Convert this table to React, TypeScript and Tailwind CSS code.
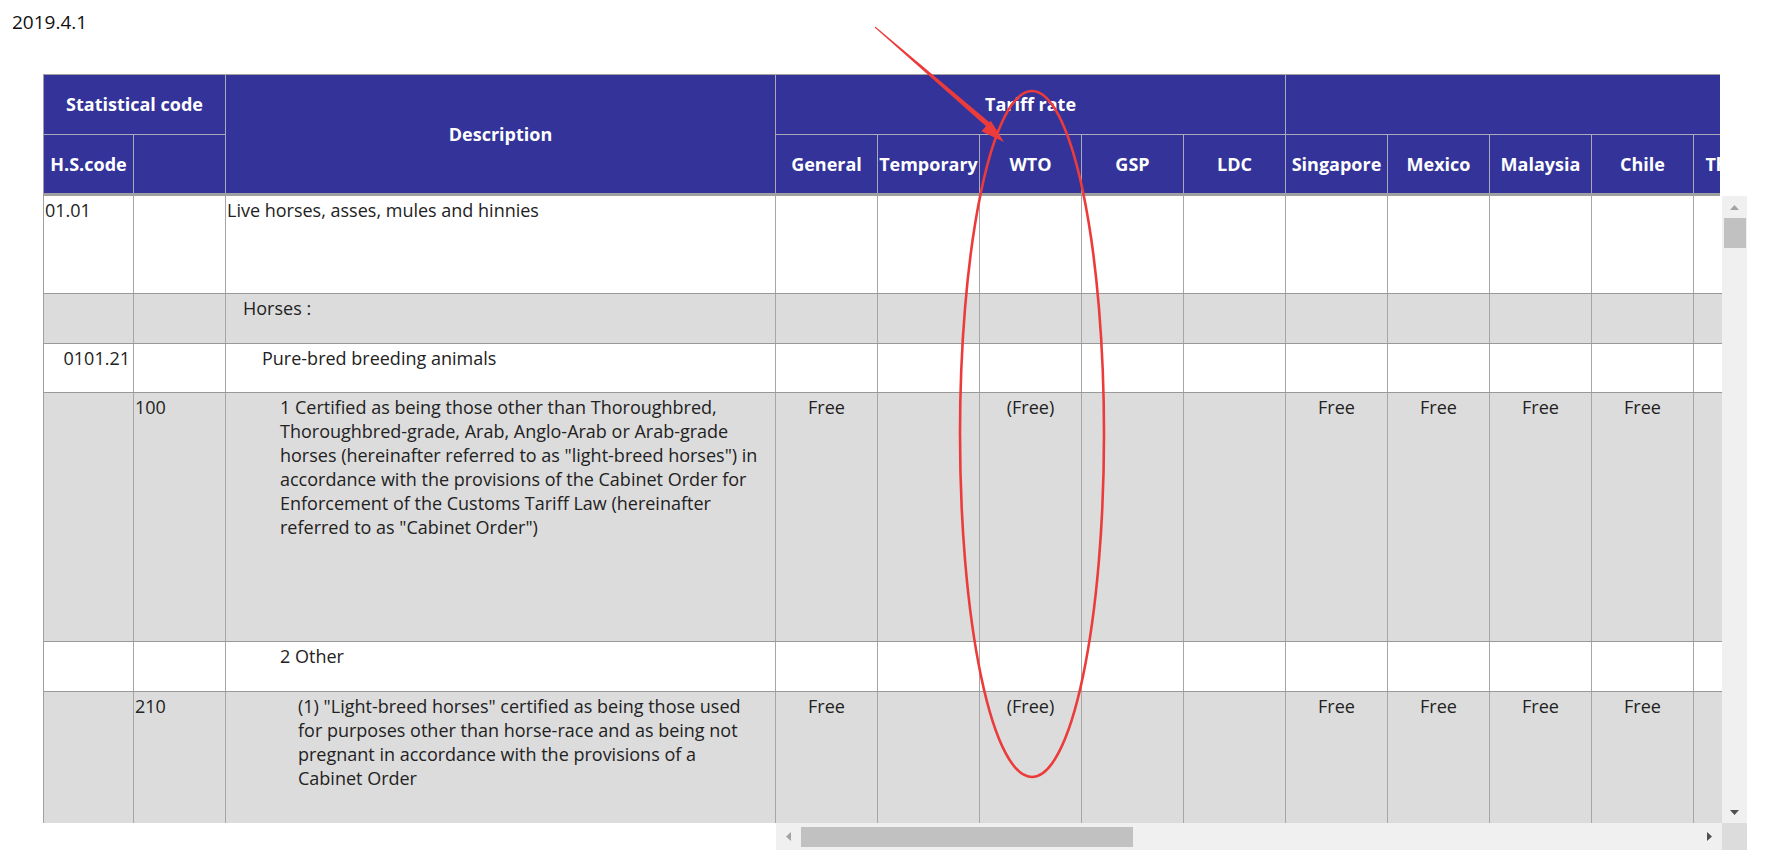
import React from "react";

const COLS = ["General", "Temporary", "WTO", "GSP", "LDC", "Singapore", "Mexico", "Malaysia", "Chile", "Thailand"];

type Row = {
  h: string;
  gray: boolean;
  hs?: string;
  hsRight?: boolean;
  stat?: string;
  desc: string[];
  indent: string;
  vals?: Record<number, string>;
};

const FREE = { 0: "Free", 2: "(Free)", 5: "Free", 6: "Free", 7: "Free", 8: "Free" };

const ROWS: Row[] = [
  { h: "h-[98px]", gray: false, hs: "01.01", desc: ["Live horses, asses, mules and hinnies"], indent: "pl-[1px]" },
  { h: "h-[50px]", gray: true, desc: ["Horses :"], indent: "pl-[17px]" },
  { h: "h-[49px]", gray: false, hs: "0101.21", hsRight: true, desc: ["Pure-bred breeding animals"], indent: "pl-[36px]" },
  {
    h: "h-[249px]",
    gray: true,
    stat: "100",
    desc: [
      "1 Certified as being those other than Thoroughbred,",
      "Thoroughbred-grade, Arab, Anglo-Arab or Arab-grade",
      'horses (hereinafter referred to as "light-breed horses") in',
      "accordance with the provisions of the Cabinet Order for",
      "Enforcement of the Customs Tariff Law (hereinafter",
      'referred to as "Cabinet Order")',
    ],
    indent: "pl-[54px]",
    vals: FREE,
  },
  { h: "h-[50px]", gray: false, desc: ["2 Other"], indent: "pl-[54px]" },
  {
    h: "h-[200px]",
    gray: true,
    stat: "210",
    desc: [
      '(1) "Light-breed horses" certified as being those used',
      "for purposes other than horse-race and as being not",
      "pregnant in accordance with the provisions of a",
      "Cabinet Order",
    ],
    indent: "pl-[72px]",
    vals: FREE,
  },
];

function Tri({ dir, color }: { dir: "up" | "down" | "left" | "right"; color: string }) {
  const pts =
    dir === "up"
      ? "0,5 4.5,0 9,5"
      : dir === "down"
      ? "0,0 9,0 4.5,5"
      : dir === "left"
      ? "5,0 5,9 0,4.5"
      : "0,0 0,9 5,4.5";
  const w = dir === "up" || dir === "down" ? 9 : 5;
  const h = dir === "up" || dir === "down" ? 5 : 9;
  return (
    <svg width={w} height={h} viewBox={`0 0 ${w} ${h}`}>
      <polygon points={pts} fill={color} />
    </svg>
  );
}

export default function App() {
  return (
    <div className="relative w-[1772px] h-[852px] overflow-hidden bg-white font-['Open_Sans','Noto_Sans',sans-serif] text-[#222]">
      <div className="h-[74px] pl-[12px] pt-[9px] text-[19px] leading-[26px] text-[#111]">2019.4.1</div>

      <div className="flex pl-[43px]">
        {/* Left frozen pane */}
        <div className="w-[733px] shrink-0">
          <div className="grid grid-cols-[90px_92px_550px] grid-rows-[60px_58px] border-l border-t border-[#a0a0a0] border-b-[3px] border-b-[#a0a0a0] bg-[#333399] text-white font-bold text-[18px]">
            <div className="col-span-2 flex items-center justify-center border-r border-b border-[#a9a9b8]">Statistical code</div>
            <div className="row-span-2 flex items-center justify-center border-r border-[#a9a9b8]">Description</div>
            <div className="flex items-center justify-center border-r border-[#a9a9b8]">H.S.code</div>
            <div className="border-r border-[#a9a9b8]"></div>
          </div>
          <div className="h-[627px] overflow-hidden border-l border-[#a0a0a0]">
            {ROWS.map((r, i) => (
              <div
                key={i}
                className={`grid grid-cols-[90px_92px_550px] ${r.h} ${r.gray ? "bg-[#dcdcdc]" : "bg-white"} border-b border-[#999999] text-[18px] leading-[24px]`}
              >
                <div className={`border-r border-[#a6a6a6] pt-[2px] ${r.hsRight ? "text-right pr-[3px]" : "pl-[1px]"}`}>{r.hs}</div>
                <div className="border-r border-[#a6a6a6] pt-[2px] pl-[1px]">{r.stat}</div>
                <div className={`border-r border-[#a6a6a6] pt-[2px] ${r.indent}`}>
                  {r.desc.map((l, j) => (
                    <div key={j} className="whitespace-nowrap">
                      {l}
                    </div>
                  ))}
                </div>
              </div>
            ))}
          </div>
        </div>

        {/* Right scrollable pane */}
        <div className="w-[971px] shrink-0">
          <div className="flex">
            <div className="w-[944px] overflow-hidden">
              <div className="grid grid-cols-[repeat(10,102px)] grid-rows-[60px_58px] w-[1020px] border-t border-[#a0a0a0] border-b-[3px] border-b-[#a0a0a0] bg-[#333399] text-white font-bold text-[18px]">
                <div className="col-span-5 flex items-center justify-center border-r border-b border-[#a9a9b8]">Tariff rate</div>
                <div className="col-span-5 border-b border-[#a9a9b8]"></div>
                {COLS.map((c) => (
                  <div key={c} className="flex items-center justify-center border-r border-[#a9a9b8] whitespace-nowrap">
                    {c}
                  </div>
                ))}
              </div>
            </div>
            <div className="w-[27px] h-[122px]"></div>
          </div>

          <div className="flex h-[627px]">
            <div className="w-[946px] overflow-hidden">
              {ROWS.map((r, i) => (
                <div
                  key={i}
                  className={`flex w-[1020px] ${r.h} ${r.gray ? "bg-[#dcdcdc]" : "bg-white"} border-b border-[#999999] text-[18px] leading-[24px]`}
                >
                  {COLS.map((c, k) => (
                    <div key={c} className="w-[102px] shrink-0 border-r border-[#a6a6a6] pt-[2px] text-center">
                      {r.vals ? r.vals[k] : ""}
                    </div>
                  ))}
                </div>
              ))}
            </div>
            <div className="w-[25px] bg-[#f0f0f0] flex flex-col items-center">
              <div className="h-[22px] flex items-center justify-center">
                <Tri dir="up" color="#a3a3a3" />
              </div>
              <div className="w-[22px] h-[30px] bg-[#c1c1c1]"></div>
              <div className="flex-1"></div>
              <div className="h-[22px] flex items-center justify-center">
                <Tri dir="down" color="#505050" />
              </div>
            </div>
          </div>

          <div className="flex h-[27px]">
            <div className="w-[947px] bg-[#f0f0f0] flex items-center">
              <div className="w-[25px] flex justify-center">
                <Tri dir="left" color="#a3a3a3" />
              </div>
              <div className="w-[332px] h-[20px] bg-[#c1c1c1]"></div>
              <div className="flex-1"></div>
              <div className="w-[25px] flex justify-center">
                <Tri dir="right" color="#505050" />
              </div>
            </div>
            <div className="w-[25px] bg-[#dcdcdc]"></div>
          </div>
        </div>
      </div>

      {/* Red annotation overlay */}
      <svg className="absolute left-0 top-0 pointer-events-none" width="1772" height="852" viewBox="0 0 1772 852">
        <polygon points="874.7,27.4 875.3,26.6 989.7,122.6 986.3,126.4" fill="#ec3b3b" />
        <polygon points="1004,142 981.4,131.2 990.8,120.8" fill="#ec3b3b" />
        <ellipse cx="1032" cy="434" rx="72" ry="343" fill="none" stroke="#ec3b3b" strokeWidth="2.6" />
      </svg>
    </div>
  );
}
